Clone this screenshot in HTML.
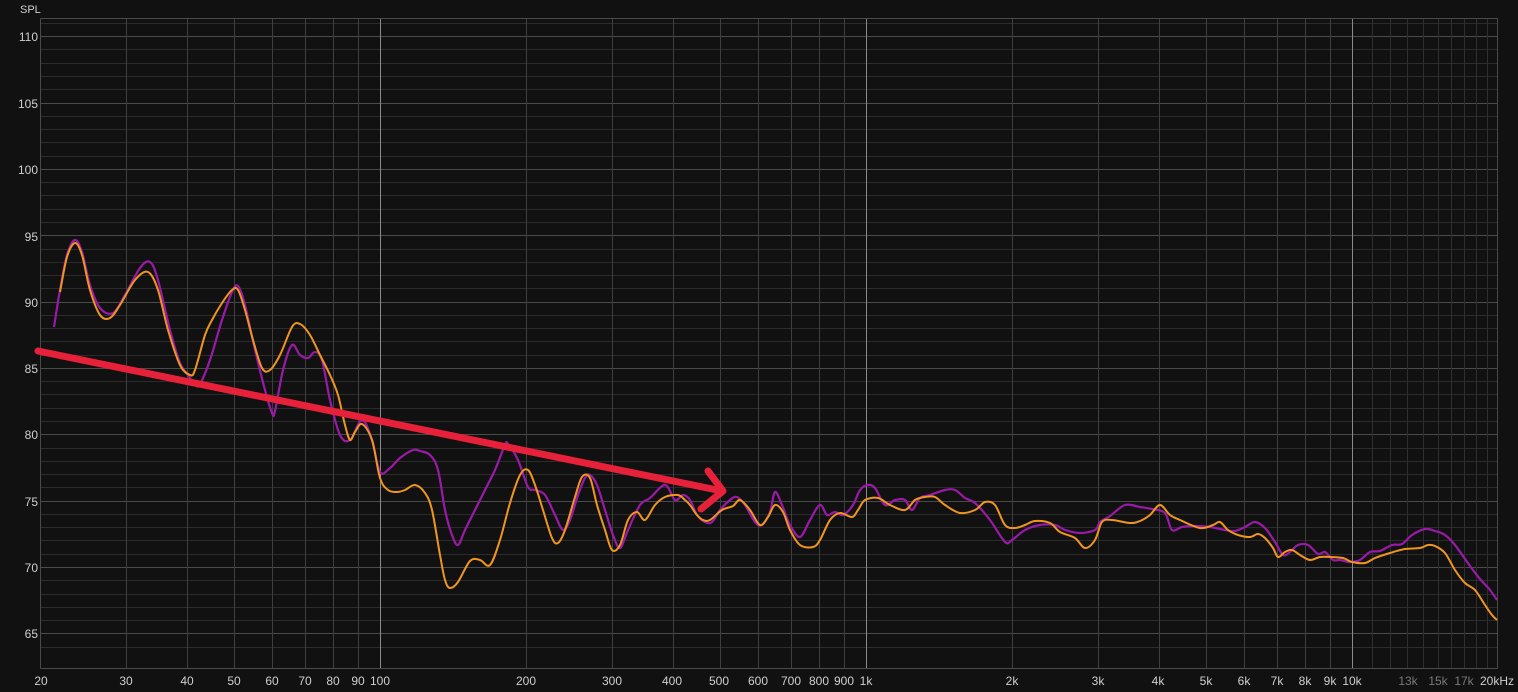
<!DOCTYPE html>
<html><head><meta charset="utf-8"><style>
html,body{margin:0;padding:0;background:#111;}
body{width:1518px;height:692px;overflow:hidden;position:relative;font-family:"Liberation Sans",sans-serif;}
.yl{position:absolute;right:1480px;font-size:12px;color:#cfcfcf;line-height:12px;}
.xl{position:absolute;top:675px;font-size:12px;color:#cfcfcf;transform:translateX(-50%);line-height:12px;}
.dim{color:#7a7a7a;}
svg{position:absolute;left:0;top:0;}
</style></head><body>
<svg id="s" width="1518" height="692" viewBox="0 0 1518 692">
<g id="grid"></g>
<polyline class="cv" fill="none" stroke="#9a1aa8" stroke-width="2.2" stroke-linejoin="round" points="54,327 60,290 67,255 75,240 82,252 90,285 100,308 113,313 125,295 140,268 150,262 158,280 170,330 180,363 188,375 195,385 200,384 210,360 222,320 232,292 238,286 245,305 255,350 265,390 272,413 275,411 283,370 292,345 300,355 308,358 315,352 322,360 330,400 340,435 350,440 362,420 372,440 380,472 390,468 400,458 413,450 420,451 430,455 438,470 445,510 452,535 458,545 465,530 475,510 485,490 495,470 505,445 508,444 518,460 528,487 535,490 545,495 555,515 563,530 570,520 578,495 585,478 590,475 597,485 605,510 613,535 620,548 628,530 640,505 650,498 665,485 675,500 683,495 690,500 697,515 705,522 712,522 720,510 730,500 737,497 745,505 755,522 762,525 770,512 775,492 782,505 790,525 800,537 810,520 820,505 827,515 835,512 843,515 853,505 860,490 868,485 875,488 885,505 895,500 905,500 912,510 920,498 930,495 945,490 955,490 965,498 975,503 990,520 1005,542 1012,540 1025,530 1040,525 1055,525 1065,530 1080,533 1095,530 1100,522 1110,516 1125,505 1140,507 1152,509 1165,513 1172,530 1182,527 1195,526 1210,527 1225,530 1235,531 1245,527 1255,522 1265,528 1275,542 1283,555 1290,552 1298,545 1308,545 1318,554 1325,552 1333,560 1340,560 1350,562 1360,560 1370,552 1380,551 1392,545 1402,544 1412,535 1425,529 1435,531 1445,535 1455,545 1470,566 1480,579 1490,590 1497,600"/>
<polyline class="cv" fill="none" stroke="#f0961e" stroke-width="2" stroke-linejoin="round" points="60,292 67,257 75,243 82,255 90,290 100,315 110,318 120,305 135,280 148,272 158,290 168,330 180,365 190,375 195,370 205,335 212,320 222,303 232,290 238,290 245,310 253,340 262,368 270,370 280,355 292,327 300,324 310,335 320,355 330,375 338,395 345,425 350,440 355,432 362,424 372,440 380,478 388,490 397,492 405,490 415,485 425,493 432,510 440,555 445,580 450,588 458,582 470,561 480,560 490,565 500,540 510,503 520,475 528,470 535,485 543,510 552,538 558,543 565,530 575,497 582,477 590,478 597,505 605,530 612,550 620,545 628,520 637,512 645,520 655,505 665,497 678,495 685,500 690,505 697,515 703,520 710,520 722,510 733,506 740,500 750,510 760,525 768,517 775,505 783,512 790,530 800,545 813,547 820,540 830,520 840,513 852,517 858,510 865,500 878,498 890,505 905,510 915,500 925,497 935,497 945,505 960,513 975,510 985,502 995,505 1005,525 1015,528 1025,525 1035,521 1050,523 1060,532 1075,538 1085,548 1095,540 1102,522 1112,520 1130,523 1140,521 1150,515 1160,505 1170,515 1180,520 1200,528 1213,525 1220,522 1228,530 1238,535 1250,537 1258,534 1265,538 1273,548 1278,557 1285,552 1292,550 1300,555 1310,560 1320,557 1330,557 1343,558 1352,562 1365,563 1375,558 1390,553 1405,549 1420,548 1428,545 1435,546 1445,553 1455,570 1465,583 1475,590 1485,605 1492,615 1497,620"/>
<g stroke="#e8213a" stroke-width="7" stroke-linecap="round" fill="none" stroke-linejoin="round">
<line x1="38" y1="351" x2="722" y2="491"/>
<polyline points="708,471 723,491 701,509"/>
</g>
</svg>
<div style="position:absolute;left:20px;top:4px;font-size:11px;color:#cfcfcf;">SPL</div>
<div class="yl" style="top:31px">110</div>
<div class="yl" style="top:98px">105</div>
<div class="yl" style="top:164px">100</div>
<div class="yl" style="top:231px">95</div>
<div class="yl" style="top:297px">90</div>
<div class="yl" style="top:363px">85</div>
<div class="yl" style="top:429px">80</div>
<div class="yl" style="top:496px">75</div>
<div class="yl" style="top:562px">70</div>
<div class="yl" style="top:628px">65</div>
<div class="xl" style="left:41px">20</div>
<div class="xl" style="left:126px">30</div>
<div class="xl" style="left:187px">40</div>
<div class="xl" style="left:234px">50</div>
<div class="xl" style="left:272px">60</div>
<div class="xl" style="left:305px">70</div>
<div class="xl" style="left:333px">80</div>
<div class="xl" style="left:358px">90</div>
<div class="xl" style="left:380px">100</div>
<div class="xl" style="left:526px">200</div>
<div class="xl" style="left:612px">300</div>
<div class="xl" style="left:672px">400</div>
<div class="xl" style="left:719px">500</div>
<div class="xl" style="left:758px">600</div>
<div class="xl" style="left:791px">700</div>
<div class="xl" style="left:819px">800</div>
<div class="xl" style="left:844px">900</div>
<div class="xl" style="left:866px">1k</div>
<div class="xl" style="left:1012px">2k</div>
<div class="xl" style="left:1098px">3k</div>
<div class="xl" style="left:1158px">4k</div>
<div class="xl" style="left:1206px">5k</div>
<div class="xl" style="left:1244px">6k</div>
<div class="xl" style="left:1277px">7k</div>
<div class="xl" style="left:1305px">8k</div>
<div class="xl" style="left:1330px">9k</div>
<div class="xl" style="left:1352px">10k</div>
<div class="xl dim" style="left:1408px">13k</div>
<div class="xl dim" style="left:1438px">15k</div>
<div class="xl dim" style="left:1464px">17k</div>
<div class="xl" style="left:1497px">20kHz</div>
<script>
(function(){
var g=document.getElementById('grid'),ns='http://www.w3.org/2000/svg';
function ln(x1,y1,x2,y2,c){var l=document.createElementNS(ns,'line');l.setAttribute('x1',x1);l.setAttribute('y1',y1);l.setAttribute('x2',x2);l.setAttribute('y2',y2);l.setAttribute('stroke',c);l.setAttribute('stroke-width',1);g.appendChild(l);}
var L=40.5,R=1497.5,T=18.5,B=668.5;
function y(d){return 567-(d-70)*13.27;}
for(var d=64;d<=111;d++){var yy=Math.round(y(d))+0.5;if(yy<T||yy>B)continue;ln(L,yy,R,yy,d%5==0?'#4a4a4a':'#2b2b2b');}
function x(f){return 380+486*Math.log10(f/100);}
var fs=[];for(var f=30;f<100;f+=10)fs.push(f);for(f=200;f<1000;f+=100)fs.push(f);for(f=2000;f<10000;f+=1000)fs.push(f);
fs.forEach(function(f){var xx=Math.round(x(f))+0.5;ln(xx,T,xx,B,'#3e3e3e');});
for(f=11000;f<20000;f+=1000){var xx=Math.round(x(f))+0.5;ln(xx,T,xx,B,'#2e2e2e');}
[100,1000,10000].forEach(function(f){var xx=Math.round(x(f))+0.5;ln(xx,T,xx,B,'#8a8a8a');});
ln(L,T,R,T,'#4a4a4a');ln(L,B,R,B,'#4a4a4a');ln(L,T,L,B,'#4a4a4a');ln(R,T,R,B,'#4a4a4a');
/* smooth curves */
Array.prototype.forEach.call(document.querySelectorAll('.cv'),function(pl){
var p=pl.getAttribute('points').trim().split(/\s+/).map(function(s){return s.split(',').map(Number);});
var d='M'+p[0][0]+','+p[0][1];
for(var i=0;i<p.length-1;i++){var p0=p[i-1]||p[i],p1=p[i],p2=p[i+1],p3=p[i+2]||p2;
d+=' C'+(p1[0]+(p2[0]-p0[0])/6).toFixed(1)+','+(p1[1]+(p2[1]-p0[1])/6).toFixed(1)+' '+(p2[0]-(p3[0]-p1[0])/6).toFixed(1)+','+(p2[1]-(p3[1]-p1[1])/6).toFixed(1)+' '+p2[0]+','+p2[1];}
var pa=document.createElementNS(ns,'path');pa.setAttribute('d',d);pa.setAttribute('fill','none');pa.setAttribute('stroke',pl.getAttribute('stroke'));pa.setAttribute('stroke-width',pl.getAttribute('stroke-width'));
pl.parentNode.replaceChild(pa,pl);});
})();
</script>
</body></html>
